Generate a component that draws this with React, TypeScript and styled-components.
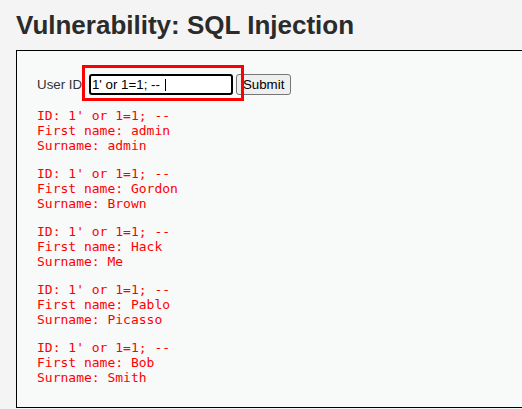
import React from 'react'
import styled, { createGlobalStyle } from 'styled-components'

const GlobalStyle = createGlobalStyle`
  html, body {
    margin: 0;
    padding: 0;
    background: #f4f4f4;
    overflow: hidden;
  }
  body {
    font-family: "Liberation Sans", Arial, sans-serif;
    color: #333;
  }
`

const Page = styled.div`
  padding: 10px 0 0 16px;
  overflow: hidden;
`

const Title = styled.h1`
  margin: 0 0 10px 0;
  font-size: 26px;
  line-height: 30px;
  font-weight: bold;
  color: #2b2b2b;
`

const CodeArea = styled.div`
  border: 1px solid #000;
  border-right: none;
  background: #f8f9f9;
  padding: 23px 20px 9px 20px;
`

const Form = styled.form`
  display: flex;
  align-items: center;
  margin: 0;
  font-size: 13.33px;
  color: #333;
`

const Label = styled.span`
  margin-right: 3px;
`

const FieldWrap = styled.div`
  position: relative;
  display: flex;
`

const Field = styled.div`
  box-sizing: border-box;
  width: 144px;
  height: 21px;
  border: 2px solid #000;
  border-radius: 3px;
  background: #fff;
  padding: 0 1px;
  display: flex;
  align-items: center;
  font-size: 13.33px;
  color: #000;
  white-space: pre;
`

const Caret = styled.span`
  display: inline-block;
  width: 1px;
  height: 12px;
  background: #000;
  margin-left: 1px;
`

const Highlight = styled.div`
  position: absolute;
  left: -7px;
  top: -9px;
  width: 162px;
  height: 36px;
  box-sizing: border-box;
  border: 3px solid #ff0000;
  pointer-events: none;
  z-index: 1;
`

const SubmitButton = styled.button`
  box-sizing: border-box;
  height: 21px;
  margin-left: 3px;
  padding: 0 6px;
  border: 1px solid #767676;
  border-radius: 3px;
  background: #efefef;
  font-family: "Liberation Sans", Arial, sans-serif;
  font-size: 13.33px;
  color: #000;
`

const Result = styled.pre`
  margin: 13px 0;
  font-family: "DejaVu Sans Mono", monospace;
  font-size: 13px;
  line-height: 15px;
  color: #ff0000;
`

const users = [
  { first: 'admin', last: 'admin' },
  { first: 'Gordon', last: 'Brown' },
  { first: 'Hack', last: 'Me' },
  { first: 'Pablo', last: 'Picasso' },
  { first: 'Bob', last: 'Smith' },
]

const payload = "1' or 1=1; --"

const App = () => {
  return (
    <Page>
      <GlobalStyle />
      <Title>Vulnerability: SQL Injection</Title>
      <CodeArea>
        <Form onSubmit={(e) => e.preventDefault()}>
          <Label>User ID:</Label>
          <FieldWrap>
            <Field>
              {payload + ' '}
              <Caret />
            </Field>
            <Highlight />
          </FieldWrap>
          <SubmitButton type="submit">Submit</SubmitButton>
        </Form>
        {users.map((u) => (
          <Result key={u.first}>
            {`ID: ${payload}\nFirst name: ${u.first}\nSurname: ${u.last}`}
          </Result>
        ))}
      </CodeArea>
    </Page>
  )
}

export default App
